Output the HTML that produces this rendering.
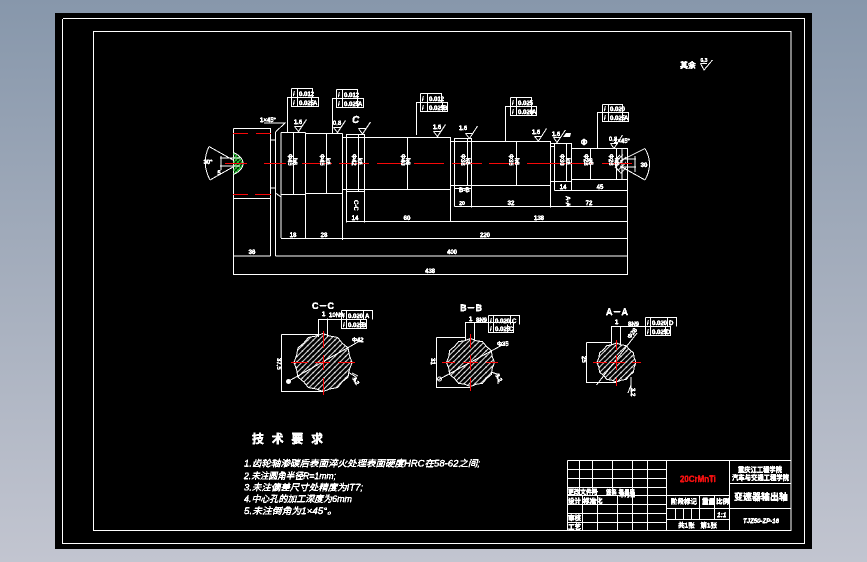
<!DOCTYPE html>
<html lang="zh"><head><meta charset="utf-8"><title>变速器输出轴</title>
<style>
html,body{margin:0;padding:0;width:867px;height:562px;overflow:hidden}
body{background:linear-gradient(180deg,#8797ab 0%,#a5aebd 50%,#c2c5d0 100%)}
svg{position:absolute;left:0;top:0;display:block}
text{font-family:"Liberation Sans","Noto Sans CJK SC",sans-serif;fill:#fff;stroke:#fff;stroke-width:.2px}
.l{fill:none;stroke:#fff;stroke-width:1;shape-rendering:crispEdges}
.r{fill:none;stroke:#f80808;stroke-width:1;shape-rendering:crispEdges}
.s{font-size:6px;font-weight:bold}
.v{font-size:7px;font-weight:bold}
.i{font-size:9px;font-style:italic}
.c{text-anchor:middle}
</style></head><body>
<svg width="867" height="562" viewBox="0 0 867 562" xmlns="http://www.w3.org/2000/svg">
<defs>
<filter id="t" x="-10%" y="-30%" width="120%" height="160%" color-interpolation-filters="sRGB"><feComponentTransfer><feFuncA type="discrete" tableValues="0 1 1 1"/></feComponentTransfer></filter>
<pattern id="h" width="5.4" height="5.4" patternUnits="userSpaceOnUse"><path d="M-1 6.4L6.4-1M-1 1.4L1.4-1M4 6.4L6.4 4" stroke="#fff" stroke-width=".9" fill="none"/></pattern>
<pattern id="g" width="4" height="4" patternUnits="userSpaceOnUse"><path d="M0 4L4 0" stroke="#22d030" stroke-width="1.2" fill="none"/><path d="M0 0L4 4" stroke="#22d030" stroke-width=".7" fill="none"/></pattern>
</defs>
<rect x="55" y="13" width="757" height="536" fill="#000"/>
<path class="l" d="M63 18.5H804.5V543.5H62.5V19M93.5 31.5H791V530.5H93.5Z"/>

<!-- shaft -->
<path class="l" d="M233.5 128.5H270.5V256M233.5 128.5V275M233.5 198.5H270.5M233 256H270.5M233 274.5H627.5M275.5 256H627.5
M270.5 140H275M270.5 188H275
M275.5 132V256M275.5 132L285 123H264M275.5 193L281 197
M281 132.5V238M281 132.5H305.5M281 194.5H305.5M293.5 132.5V194.5M305.5 132.5V238M305.5 133.5H342.5M305.5 193.5H342.5M326.5 133.5V193.5M342.5 133.5V240
M281 238.5H627.5
M342.5 137.5H450.5M342.5 189.5H450.5M346.5 134.5H364.5M346.5 134V222.5M358.5 134V191M364.5 134V222.5M346.5 191.5H364.5
M346.5 221.5H627.5M407.5 137.5V189
M450.5 137V222M450.5 141.5H550.5M450.5 185.5H550.5M454.5 138.5H471.5M454.5 138V206.5M467.5 138V185M471.5 138V207.5M454.5 188.5H471.5
M454.5 206.5H627.5M516.5 141.5V185.5M550.5 141V207.5
M550.5 143.5H571.5M550.5 146.5H554.5M550.5 181.5H571.5M554.5 143V190.5M566.5 143V181M571.5 143V190.5M554.5 190.5H627.5
M571.5 148.5H622M571.5 179.5H622M590.5 148.5V179.5M616.5 148.5V179.5M622 148V180M627.5 148V275"/>
<path class="l" d="M622 148.5H627.5M622 179.5H627.5"/>
<!-- centre-end left -->
<path d="M233.5 152.5Q243 157 243 163.5Q243 170 233.5 174.5Z" fill="url(#g)"/>
<path class="l" d="M233.5 152.5Q243 157 243 163.5Q243 170 233.5 174.5M209 146.5L233 160M210 180L233 167M209 146.5Q201 163 210 180M220 158H240M220 166H240M221 156V170"/>
<!-- centre-end right -->
<path d="M621 153L610 163L621 174L626 170L626 157Z" fill="url(#h)"/>
<path class="l" d="M620 155Q610 163 620 172M645 148.5L620 161M645 180L620 166M645 148.5Q654 164 645 180M622 159H636M622 167H636M635 156V172"/>
<!-- centre lines -->
<path class="r" d="M225 163.5H247M264 163.5H286M302 163.5H332M339 163.5H369M377 163.5H403M414 163.5H444M452 163.5H482M489 163.5H519M527 163.5H593M602 163.5H632"/>
<path class="r" d="M233 133.5H248M256 133.5H271M233 194.5H248M255 194.5H271" style="stroke-width:1.4"/>

<!-- roughness symbols -->
<g class="l">
<path d="M294.5 126.5H302M294.5 126.5L298.5 131.5L306.5 119.5"/>
<path d="M333.5 127.5H341M333.5 127.5L337.5 132.5L345.5 120.5"/>
<path d="M358.5 128.5H366M358.5 128.5L362.5 134L370.5 122"/>
<path d="M433.5 131.5H441M433.5 131.5L437.5 136.5L445.5 124.5"/>
<path d="M465.5 133.5H473M465.5 133.5L469.5 138.5L477.5 126"/>
<path d="M534.5 136.5H542M534.5 136.5L538.5 141L546.5 128.5"/>
<path d="M553.5 137.5H561M553.5 137.5L557 142.5L565.5 130"/>
<path d="M610.5 143.5H618M610.5 143.5L614 148.5L622.5 135"/>
<path d="M700.5 63.5H707M700.5 63.5L704 70L712.5 60"/>
</g>
<path d="M566 133L571 133L570 137L563 137Z" fill="#fff"/>

<!-- tolerance frames -->
<g class="l">
<path d="M291.5 88.5H312.5V97.5M291.5 88.5V106.5H318.5V97.5H287.5V132M297.5 88.5V106.5M311.5 97.5V106.5"/>
<path d="M336.5 89.5H357.5V98.5M336.5 89.5V107.5H363.5V98.5H332.5V133M342.5 89.5V107.5M357.5 98.5V107.5"/>
<path d="M420.5 93.5H441.5V102.5M420.5 93.5V111.5H447.5V102.5H416.5V135M427.5 93.5V111.5M442.5 102.5V111.5"/>
<path d="M510.5 97.5H531.5V106.5M510.5 97.5V115.5H536.5V106.5H505.5V141M516.5 97.5V115.5M531.5 106.5V115.5"/>
<path d="M602.5 104.5H622.5V112.5M602.5 104.5V121.5H628.5V112.5H597.5V148M608.5 104.5V121.5M622.5 112.5V121.5"/>
<!-- section frames -->
<path d="M341.5 310.5H372.5V319.5M341.5 310.5V328.5H366.5V319.5H318.5V337M327.5 318.5V337M346.5 310.5V328.5M363.5 310.5V319.5M360.5 319.5V328.5"/>
<path d="M488.5 315.5H519.5V324.5M488.5 315.5V332.5H513.5V322.5H465.5V340M474.5 322.5V340M493.5 315.5V332.5M510.5 315.5V324.5M507.5 324.5V332.5"/>
<path d="M645.5 317.5H676.5V326.5M645.5 317.5V335.5H670.5V326.5H611.5V345M620.5 326.5V345M650.5 317.5V335.5M667.5 317.5V326.5M665.5 326.5V335.5"/>
<!-- section extension -->
<path d="M281.5 334.5H318M281.5 334.5V391.5H323.5"/>
<path d="M436.5 337.5H465M436.5 337.5V387.5H470"/>
<path d="M586.5 342.5H611M586.5 342.5V382.5H616"/>
</g>

<!-- sections -->
<polygon class="l" style="fill:url(#h)" points="352,362.5 349.4,369.6 348.1,377 342.3,381.8 337.5,387.6 330.1,388.9 323,391.5 315.9,388.9 308.5,387.6 303.7,381.8 297.9,377 296.6,369.6 294,362.5 296.6,355.4 297.9,348 303.7,343.2 308.5,337.4 315.9,336.1 323,333.5 330.1,336.1 337.5,337.4 342.3,343.2 348.1,348 349.4,355.4"/>
<polygon class="l" style="fill:url(#h)" points="494.5,362.5 492.3,368.3 491.3,374.5 486.5,378.5 482.5,383.3 476.3,384.3 470.5,386.5 464.7,384.3 458.5,383.3 454.5,378.5 449.7,374.5 448.7,368.3 446.5,362.5 448.7,356.7 449.7,350.5 454.5,346.5 458.5,341.7 464.7,340.7 470.5,338.5 476.3,340.7 482.5,341.7 486.5,346.5 491.3,350.5 492.3,356.7"/>
<polygon class="l" style="fill:url(#h)" points="636,362.5 634.2,367.2 633.4,372.3 629.4,375.4 626.3,379.4 621.2,380.2 616.5,382 611.8,380.2 606.7,379.4 603.6,375.4 599.6,372.3 598.8,367.2 597,362.5 598.8,357.8 599.6,352.7 603.6,349.6 606.7,345.6 611.8,344.8 616.5,343 621.2,344.8 626.3,345.6 629.4,349.6 633.4,352.7 634.2,357.8"/>
<path class="l" d="M288 381.5L361.5 340M438 380L505 343.5M596.5 385L637 333"/>
<path class="l" d="M348 372L356 377L355 383M352 373L358 376M491 372L500 375M498 375L498 384M631 377V392M628 393L631 385"/>
<circle cx="288.5" cy="381.5" r="2.5" fill="#fff"/><circle cx="439.5" cy="379" r="2" fill="none" stroke="#fff"/>
<path class="r" d="M291 362.5H308M315 362.5H330M338 362.5H355M323.5 331V348M323.5 355V370M323.5 378V395
M442 362.5H455M463 362.5H478M486 362.5H498M470.5 334V348M470.5 355V370M470.5 378V391
M593 362.5H607M610 362.5H625M632 362.5H641M616.5 340V350M616.5 355V370M616.5 378V386"/>

<!-- title block -->
<path class="l" d="M567.5 460.5H791M567.5 460.5V530.5H791M567.5 469.5H666M567.5 478.5H666M567.5 487.5H666M567.5 495.5H729M567.5 504.5H666M567.5 513.5H666M567.5 522.5H666
M579.5 460.5V495.5M592.5 460.5V495.5M612.5 460.5V495.5M632.5 460.5V530.5M647.5 460.5V530.5M666.5 460.5V530.5M729.5 460.5V530.5
M582.5 495.5V530.5M597.5 495.5V530.5M617.5 495.5V530.5
M729.5 483.5H791M666.5 508.5H791M666.5 519.5H729M699.5 495.5V519.5M714.5 495.5V519.5M675.5 508.5V519.5M683.5 508.5V519.5M691.5 508.5V519.5"/>

<g filter="url(#t)">
<!-- rotated dim values -->
<g class="v">
<text x="288" y="154" transform="rotate(90 288 154)" style="font-size:6px">Φ45</text><text x="293" y="158" transform="rotate(90 293 158)" style="font-size:6px">h6</text>
<text x="320" y="154" transform="rotate(90 320 154)" style="font-size:6px">Φ45</text><text x="326" y="158" transform="rotate(90 326 158)" style="font-size:6px">k6</text>
<text x="352" y="154" transform="rotate(90 352 154)" style="font-size:6px">Φ42</text><text x="358" y="158" transform="rotate(90 358 158)" style="font-size:6px">k6</text>
<text x="401" y="154" transform="rotate(90 401 154)" style="font-size:6px">Φ40</text><text x="406" y="158" transform="rotate(90 406 158)" style="font-size:6px">h6</text>
<text x="461" y="154" transform="rotate(90 461 154)" style="font-size:6px">Φ38</text><text x="466" y="158" transform="rotate(90 466 158)" style="font-size:6px">k6</text>
<text x="509" y="154" transform="rotate(90 509 154)" style="font-size:6px">Φ35</text><text x="515" y="158" transform="rotate(90 515 158)" style="font-size:6px">h6</text>
<text x="560" y="154" transform="rotate(90 560 154)" style="font-size:6px">Φ30</text><text x="566" y="158" transform="rotate(90 566 158)" style="font-size:6px">k6</text>
<text x="584" y="154" transform="rotate(90 584 154)" style="font-size:6px">Φ28</text><text x="589" y="158" transform="rotate(90 589 158)" style="font-size:6px">g6</text>
<text x="609" y="154" transform="rotate(90 609 154)" style="font-size:6px">Φ26</text><text x="615" y="158" transform="rotate(90 615 158)" style="font-size:6px">h6</text>
</g>
<!-- horizontal dims -->
<g class="s c">
<text x="252" y="254">36</text><text x="293" y="237">18</text><text x="324" y="237">28</text><text x="355" y="220">14</text><text x="407" y="220">60</text>
<text x="539" y="220">138</text><text x="485" y="237">220</text><text x="452" y="254">400</text><text x="430" y="273">438</text>
<text x="563" y="189">14</text><text x="600" y="189">45</text><text x="511" y="205">32</text><text x="589" y="205">72</text>
<text x="462" y="205" style="font-size:5px">20</text><text x="208" y="164">30°</text><text x="644" y="167">30</text>
<text x="219" y="175">5</text>
</g>
<text x="268" y="122" class="s c">1×45°</text><text x="622" y="143" class="s c">1×45°</text>
<text x="352" y="123" class="v" style="font-size:10px;font-style:italic">C</text>
<text x="354" y="200" transform="rotate(90 354 200)" class="s">C-C</text>
<text x="459" y="192" class="s">B-B</text><text x="566" y="196" class="s" transform="rotate(90 566 196)">A-A</text>
<text x="584" y="145" class="v c" style="font-size:8px">Φ</text>
<!-- roughness values -->
<g class="s c">
<text x="298" y="124">1.6</text><text x="337" y="125">0.8</text><text x="437" y="129">1.6</text><text x="463" y="130">1.6</text>
<text x="536" y="134">1.6</text><text x="556" y="136">1.6</text><text x="613" y="141">0.8</text><text x="704" y="62" style="font-size:5px">6.3</text>
</g>
<text x="680" y="68" class="v" style="font-size:8px">其余</text>
<!-- tolerance text -->
<g class="s">
<text x="299" y="96">0.012</text><text x="299" y="105">0.025</text><text x="293" y="96">/</text><text x="293" y="105">/</text><text x="313" y="105">A</text>
<text x="344" y="97">0.012</text><text x="344" y="106">0.025</text><text x="338" y="97">/</text><text x="338" y="106">/</text><text x="358" y="106">A</text>
<text x="429" y="101">0.012</text><text x="429" y="110">0.025</text><text x="422" y="101">/</text><text x="422" y="110">/</text><text x="443" y="110">B</text>
<text x="518" y="105">0.025</text><text x="518" y="114">0.020</text><text x="512" y="105">/</text><text x="512" y="114">/</text><text x="532" y="114">A</text>
<text x="610" y="111">0.020</text><text x="610" y="120">0.025</text><text x="604" y="111">/</text><text x="604" y="120">/</text><text x="624" y="120">A</text>
<text x="348" y="318">0.020</text><text x="348" y="327">0.025</text><text x="343" y="318">/</text><text x="343" y="327">/</text><text x="365" y="318">A</text><text x="362" y="327">B</text>
<text x="495" y="323">0.020</text><text x="495" y="331">0.025</text><text x="490" y="323">/</text><text x="490" y="331">/</text><text x="512" y="323">C</text><text x="509" y="331">C</text>
<text x="652" y="325">0.020</text><text x="652" y="334">0.025</text><text x="647" y="325">/</text><text x="647" y="334">/</text><text x="669" y="325">D</text><text x="666" y="334">D</text>
</g>
<!-- section labels -->
<text x="323" y="309" class="c" style="font-size:9px;font-weight:bold">C－C</text>
<text x="471" y="311" class="c" style="font-size:9px;font-weight:bold">B－B</text>
<text x="617" y="315" class="c" style="font-size:9px;font-weight:bold">A－A</text>
<g class="s">
<text x="329" y="317">10N9</text><text x="476" y="322">8N9</text><text x="628" y="326">8N9</text>
<text x="322" y="316">1</text><text x="469" y="321">1</text><text x="615" y="324">1</text>
<text x="277" y="358" transform="rotate(90 277 358)">37.5</text><text x="431" y="358" transform="rotate(90 431 358)">31</text><text x="582" y="356" transform="rotate(90 582 356)">25</text>
<text x="352" y="342">Φ42</text><text x="497" y="346">Φ35</text><text x="630" y="339" transform="rotate(-50 630 339)">Φ28</text>
<text x="352" y="378" transform="rotate(60 352 378)">3.2</text><text x="495" y="375" transform="rotate(60 495 375)">3.2</text><text x="631" y="388" transform="rotate(90 631 388)">3.2</text>
</g>
<!-- tech requirements -->
<text x="252" y="443" style="font-size:12px;font-weight:bold;letter-spacing:7.7px">技术要求</text>
<g class="i">
<text x="244" y="466.5" textLength="236" lengthAdjust="spacingAndGlyphs">1.齿轮轴渗碳后表面淬火处理表面硬度HRC在58-62之间;</text>
<text x="244" y="479" textLength="92" lengthAdjust="spacingAndGlyphs">2.未注圆角半径R=1mm;</text>
<text x="244" y="490.5" textLength="119" lengthAdjust="spacingAndGlyphs">3.未注偏差尺寸处精度为IT7;</text>
<text x="244" y="502" textLength="108" lengthAdjust="spacingAndGlyphs">4.中心孔的加工深度为6mm</text>
<text x="244" y="514" textLength="93" lengthAdjust="spacingAndGlyphs">5.未注倒角为1×45°。</text>
</g>
<!-- title block text -->
<text x="680" y="482" textLength="36" lengthAdjust="spacingAndGlyphs" style="font-size:9.5px;font-weight:bold;fill:#f01010;stroke:#f01010">20CrMnTi</text>
<text x="738" y="472" textLength="44" lengthAdjust="spacingAndGlyphs" style="font-size:7px;font-weight:bold">重庆江工程学院</text>
<text x="732" y="480" textLength="57" lengthAdjust="spacingAndGlyphs" style="font-size:6.8px;font-weight:bold">汽车与交通工程学院</text>
<text x="734" y="500" textLength="54" lengthAdjust="spacingAndGlyphs" style="font-size:9px;font-weight:bold">变速器输出轴</text>
<text x="743" y="523" textLength="36" lengthAdjust="spacingAndGlyphs" style="font-size:6.5px;font-weight:bold;font-style:italic">TJZ50-ZP-16</text>
<g style="font-size:6.5px;font-weight:bold">
<text x="568" y="494" textLength="30" lengthAdjust="spacingAndGlyphs">更改文件号</text><text x="606" y="494" style="font-size:5.5px">签名 年月日</text>
<text x="568" y="503">设计</text><text x="583" y="503">标准化</text><text x="619" y="497" style="font-size:5.5px">年月日</text>
<text x="568" y="520">审核</text><text x="568" y="529">工艺</text>
<text x="671" y="503.5">阶段标记</text><text x="702" y="503.5">重量</text><text x="716" y="503.5">比例</text>
<text x="717" y="517" style="font-style:italic">1:1</text><text x="678" y="527.5" style="word-spacing:4px">共1张 第1张</text>
</g>
</g>
</svg>
</body></html>
